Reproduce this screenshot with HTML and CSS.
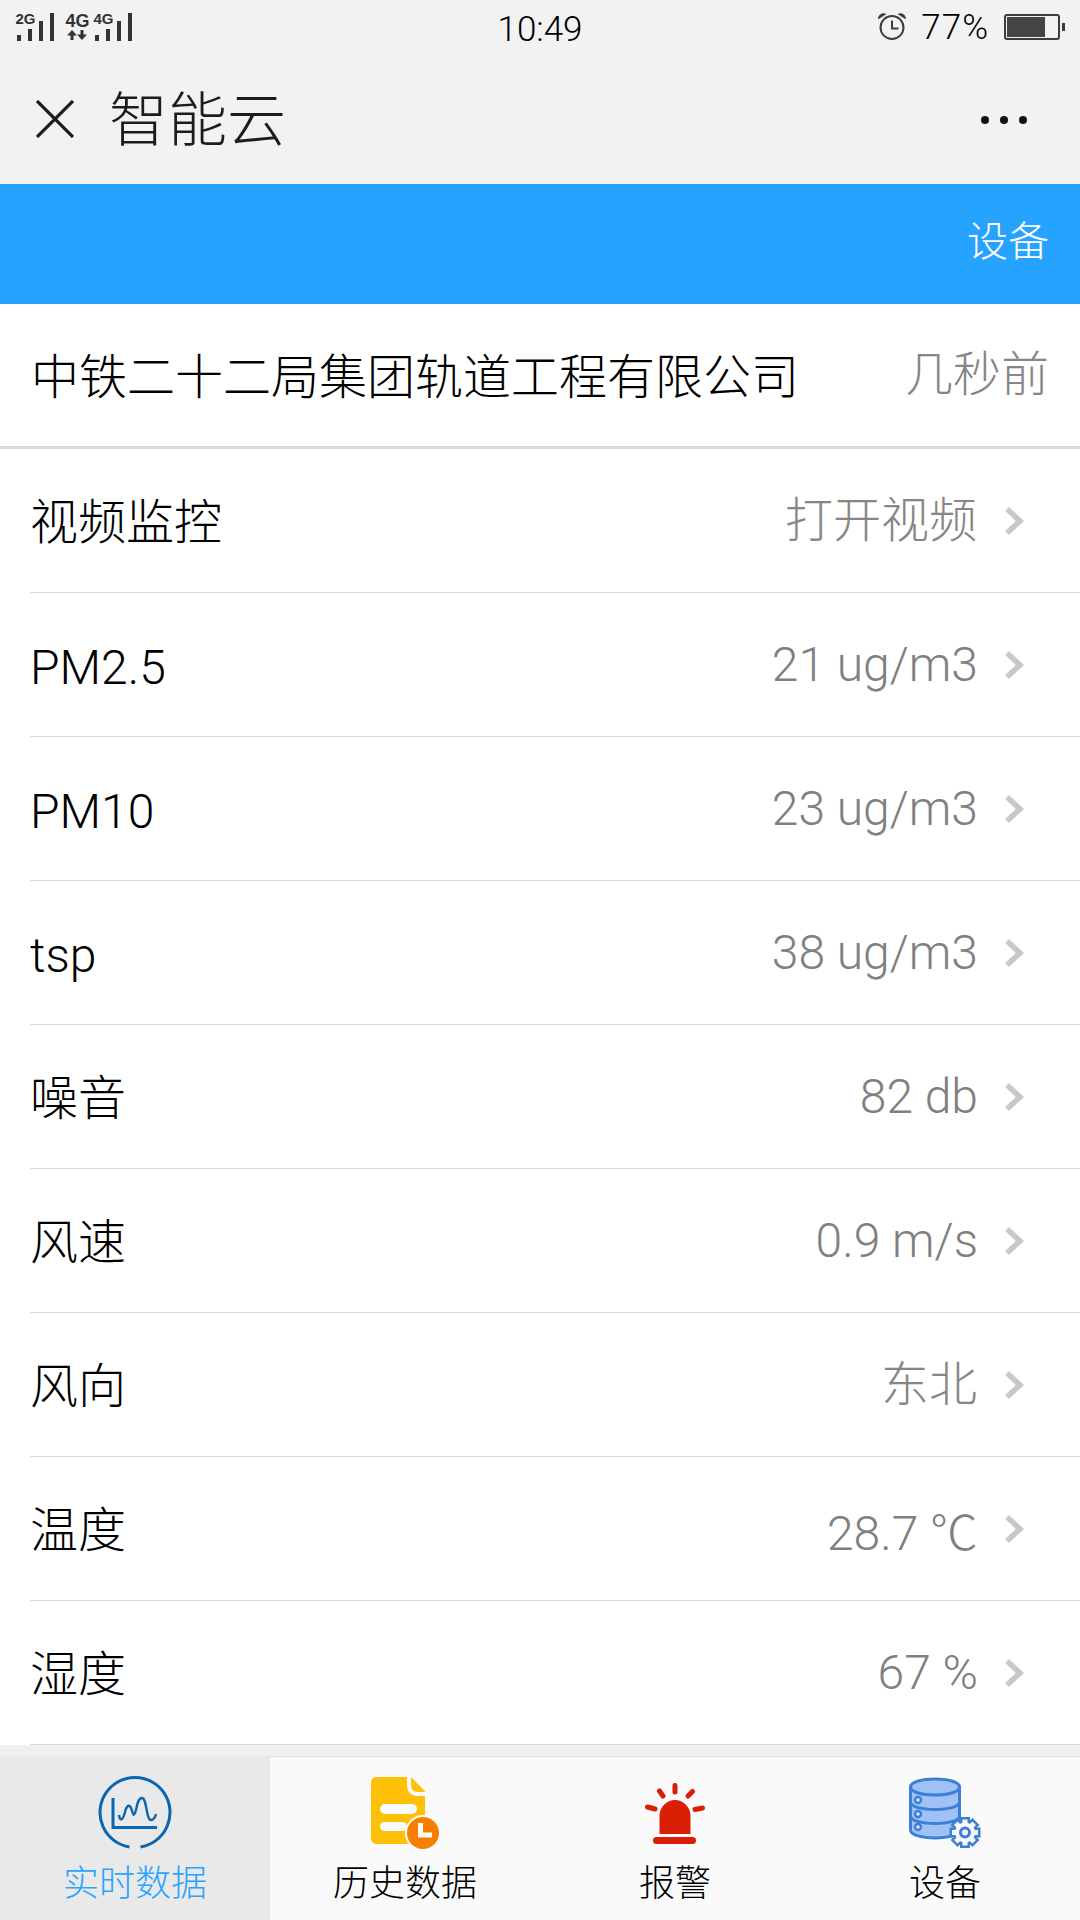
FILE: index.html
```html
<!DOCTYPE html>
<html lang="zh-CN">
<head>
<meta charset="utf-8">
<title>智能云</title>
<link rel="stylesheet" href="styles.css">
</head>
<body>
<div class="app">
  <div class="status">
    <svg class="signal" width="134" height="44" viewBox="0 0 134 44">
      <text x="15.500" y="24" class="sig-small">2G</text>
      <g fill="#333"><rect x="17" y="35" width="4" height="6"/><rect x="28" y="29" width="4" height="12"/><rect x="39" y="21" width="4" height="20"/><rect x="50" y="13" width="4" height="28"/></g>
      <text x="65.500" y="27" class="sig-big">4G</text>
      <path d="M72 30L77 35.500H73.500V40H70.500V35.500H67ZM82 40L77 34.500H80.500V30H83.500V34.500H87Z" fill="#333"/>
      <text x="93.500" y="24" class="sig-small">4G</text>
      <g fill="#333"><rect x="95" y="35" width="4" height="6"/><rect x="106" y="29" width="4" height="12"/><rect x="117" y="21" width="4" height="20"/><rect x="128" y="13" width="4" height="28"/></g>
    </svg>
    <div class="time">10:49</div>
    <div class="status-right">
      <svg class="alarm" width="30" height="30" viewBox="0 0 30 30"><circle cx="15" cy="15.500" r="11.500" fill="none" stroke="#3c3c3c" stroke-width="2"/><path d="M15 8.500V16.500H21.500" fill="none" stroke="#3c3c3c" stroke-width="2"/><path d="M1 7.500C1 2 6 0 9.500 2ZM29 7.500C29 2 24 0 20.500 2Z" fill="#3c3c3c"/></svg>
      <span class="pct">77%</span>
      <div class="battery"><div class="battery-fill"></div></div>
    </div>
  </div>

  <header class="nav">
    <svg class="close" width="38" height="38" viewBox="0 0 38 38"><path d="M1 1L37 37M37 1L1 37" stroke="#1c1c1c" stroke-width="3.200"/></svg>
    <div class="nav-title">智能云</div>
    <div class="more"><i></i><i></i><i></i></div>
  </header>

  <div class="bluebar"><span>设备</span></div>

  <div class="company">
    <span class="company-name">中铁二十二局集团轨道工程有限公司</span>
    <span class="company-time">几秒前</span>
  </div>

  <main class="list">
    <div class="row"><span class="label">视频监控</span><span class="value value-cjk">打开视频</span><svg class="chev" width="20" height="30" viewBox="0 0 20 30"><path d="M3 3L16 15L3 27" fill="none" stroke="#c7c7cc" stroke-width="5.500"/></svg></div>
    <div class="row"><span class="label label-lat">PM2.5</span><span class="value">21 ug/m3</span><svg class="chev" width="20" height="30" viewBox="0 0 20 30"><path d="M3 3L16 15L3 27" fill="none" stroke="#c7c7cc" stroke-width="5.500"/></svg></div>
    <div class="row"><span class="label label-lat">PM10</span><span class="value">23 ug/m3</span><svg class="chev" width="20" height="30" viewBox="0 0 20 30"><path d="M3 3L16 15L3 27" fill="none" stroke="#c7c7cc" stroke-width="5.500"/></svg></div>
    <div class="row"><span class="label label-lat">tsp</span><span class="value">38 ug/m3</span><svg class="chev" width="20" height="30" viewBox="0 0 20 30"><path d="M3 3L16 15L3 27" fill="none" stroke="#c7c7cc" stroke-width="5.500"/></svg></div>
    <div class="row"><span class="label">噪音</span><span class="value">82 db</span><svg class="chev" width="20" height="30" viewBox="0 0 20 30"><path d="M3 3L16 15L3 27" fill="none" stroke="#c7c7cc" stroke-width="5.500"/></svg></div>
    <div class="row"><span class="label">风速</span><span class="value">0.9 m/s</span><svg class="chev" width="20" height="30" viewBox="0 0 20 30"><path d="M3 3L16 15L3 27" fill="none" stroke="#c7c7cc" stroke-width="5.500"/></svg></div>
    <div class="row"><span class="label">风向</span><span class="value value-cjk">东北</span><svg class="chev" width="20" height="30" viewBox="0 0 20 30"><path d="M3 3L16 15L3 27" fill="none" stroke="#c7c7cc" stroke-width="5.500"/></svg></div>
    <div class="row"><span class="label">温度</span><span class="value">28.7 ℃</span><svg class="chev" width="20" height="30" viewBox="0 0 20 30"><path d="M3 3L16 15L3 27" fill="none" stroke="#c7c7cc" stroke-width="5.500"/></svg></div>
    <div class="row"><span class="label">湿度</span><span class="value">67 %</span><svg class="chev" width="20" height="30" viewBox="0 0 20 30"><path d="M3 3L16 15L3 27" fill="none" stroke="#c7c7cc" stroke-width="5.500"/></svg></div>
  </main>

  <div class="band"></div>

  <nav class="tabs">
    <div class="tab active">
      <svg width="80" height="76" viewBox="0 0 80 76"><path d="M34.500 72A35 35 0 1 1 45.500 72" fill="none" stroke="#0a66b2" stroke-width="3"/><path d="M18 23V52.500H62" fill="none" stroke="#0a66b2" stroke-width="3"/><path d="M24 40C25 47 28 45 30 37C31 32 34 28 36 33C38 38 38 42 40 38C42 34 42 23 47 23C52 23 51 45 56 45C58.500 45 60 43 61 39" fill="none" stroke="#0a66b2" stroke-width="2.400"/></svg>
      <span>实时数据</span>
    </div>
    <div class="tab">
      <svg width="80" height="76" viewBox="0 0 80 76"><path d="M12 2H46L60 16V47A18 18 0 0 0 44 69H12Q6 69 6 63V8Q6 2 12 2Z" fill="#ffc107"/><path d="M44 2V9Q44 19 53 19H60" fill="none" stroke="#fafafa" stroke-width="4"/><rect x="15" y="29" width="37" height="10" rx="5" fill="#fafafa"/><rect x="15" y="47" width="27" height="9" rx="4.500" fill="#fafafa"/><circle cx="58" cy="58" r="18" fill="#fafafa"/><circle cx="58" cy="58" r="16" fill="#f77f00"/><path d="M55.500 48V60H67" fill="none" stroke="#fafafa" stroke-width="5"/></svg>
      <span>历史数据</span>
    </div>
    <div class="tab">
      <svg width="80" height="76" viewBox="0 0 80 76"><path d="M24.500 59V41A15.500 16 0 0 1 55.500 41V59Z" fill="#db1e06"/><rect x="18" y="62" width="43" height="7" rx="3.500" fill="#db1e06"/><path d="M40 10.500V17M24.500 16L28 21M57.500 16.500L53 21M12.500 32L20 34M67.500 33L60 34.500" stroke="#db1e06" stroke-width="5" stroke-linecap="round"/></svg>
      <span>报警</span>
    </div>
    <div class="tab">
      <svg width="80" height="76" viewBox="0 0 80 76">
        <defs><g id="gear"><circle r="10"/><rect x="-2.500" y="-13" width="5" height="26"/><rect x="-2.500" y="-13" width="5" height="26" transform="rotate(45)"/><rect x="-2.500" y="-13" width="5" height="26" transform="rotate(90)"/><rect x="-2.500" y="-13" width="5" height="26" transform="rotate(135)"/></g></defs>
        <path d="M5.500 12C5.500 1.300 54.500 1.300 54.500 12V55C54.500 65.500 5.500 65.500 5.500 55Z" fill="#a0c1f5" stroke="#3e7fd6" stroke-width="3"/>
        <path d="M5.500 12C5.500 22.700 54.500 22.700 54.500 12M5.500 27C5.500 37 54.500 37 54.500 27M5.500 41C5.500 51 54.500 51 54.500 41" fill="none" stroke="#3e7fd6" stroke-width="3"/>
        <g fill="#dbe7fb" stroke="#3e7fd6" stroke-width="2.400"><circle cx="13" cy="25" r="3"/><circle cx="13" cy="39" r="3"/><circle cx="13" cy="52" r="3"/></g>
        <use href="#gear" x="60" y="57.500" fill="#3e7fd6" stroke="#3e7fd6" stroke-width="5"/>
        <use href="#gear" x="60" y="57.500" fill="#fafafa"/>
        <circle cx="60" cy="57.500" r="4.500" fill="#fafafa" stroke="#3e7fd6" stroke-width="3"/>
      </svg>
      <span>设备</span>
    </div>
  </nav>
</div>
</body>
</html>
```

FILE: styles.css
```css
* { box-sizing: border-box; }
html, body { margin: 0; padding: 0; }
body {
  width: 1080px;
  height: 1920px;
  overflow: hidden;
  background: #fff;
  font-family: Roboto, "Noto Sans CJK SC", sans-serif;
  font-weight: 300;
  color: #000;
}
.app { display: flex; flex-direction: column; height: 1920px; }

.status {
  height: 60px;
  background: #f2f2f2;
  display: grid;
  grid-template-columns: 1fr auto 1fr;
  align-items: center;
}
.signal { display: block; align-self: start; }
.sig-small { font: 700 15px "Liberation Sans", sans-serif; fill: #333; }
.sig-big { font: 700 18px "Liberation Sans", sans-serif; fill: #333; }
.time { font-size: 35px; color: #000; font-weight: 300; margin-top: -2px; }
.status-right { display: flex; align-items: center; justify-content: flex-end; padding-right: 16px; }
.alarm { display: block; margin-top: -6px; }
.pct { font-size: 35px; letter-spacing: 1px; color: #000; margin-left: 14px; margin-right: 15px; margin-top: -6px; }
.battery {
  position: relative;
  width: 56px;
  height: 26px;
  border: 2px solid #3c3c3c;
  border-radius: 3px;
  padding: 1px;
  margin-top: -6px;
  margin-right: 4px;
}
.battery::after {
  content: "";
  position: absolute;
  right: -7px;
  top: 7px;
  width: 3px;
  height: 8px;
  background: #3c3c3c;
}
.battery-fill { width: 38px; height: 20px; background: #444; }

.nav {
  height: 124px;
  background: #f2f2f2;
  display: flex;
  align-items: center;
  padding: 0 53px 0 36px;
}
.close { display: block; margin-top: -6px; }
.nav-title { font-size: 59px; color: #1c1c1c; margin-left: 35px; flex: 1; margin-top: -4px; line-height: 1; }
.more { display: flex; gap: 11px; margin-top: -4px; }
.more i { display: block; width: 8px; height: 8px; border-radius: 50%; background: #111; }

.bluebar {
  height: 120px;
  background: #26a2ff;
  display: flex;
  align-items: center;
  justify-content: flex-end;
  padding-right: 31px;
  color: #fff;
  font-size: 41px;
}
.bluebar span { margin-top: -13px; }

.company {
  height: 145px;
  display: flex;
  align-items: center;
  justify-content: space-between;
  padding: 0 31px 0 31px;
  border-bottom: 3px solid #d9d9d9;
  font-size: 48px;
}
.company-name { color: #000; margin-bottom: 5px; }
.company-time { color: #868686; font-size: 48px; margin-bottom: 10px; }

.list { flex: 1; }
.row {
  height: 144px;
  margin-left: 30px;
  padding-right: 56px;
  border-bottom: 1px solid #d9d9d9;
  display: flex;
  align-items: center;
}
.label { flex: 1; font-size: 48px; color: #000; margin-bottom: 6px; }
.label-lat { margin-bottom: 0; margin-top: 5px; }
.value { font-size: 48px; color: #808080; margin-right: 26px; }
.value-cjk { margin-bottom: 10px; margin-right: 27px; color: #868686; }
.chev { display: block; }

.band {
  height: 12px;
  background: #efefef;
  border-bottom: 1px solid #dcdcdc;
}
.tabs { height: 163px; display: flex; background: #fafafa; }
.tab {
  width: 270px;
  display: flex;
  flex-direction: column;
  align-items: center;
  padding-top: 18px;
  font-size: 36px;
  color: #000;
}
.tab svg { display: block; margin-bottom: 9px; }
.tab span { line-height: 48px; }
.tab.active { background: #e9e9e9; color: #2ba4ff; margin-top: -1px; padding-top: 19px; }
```
